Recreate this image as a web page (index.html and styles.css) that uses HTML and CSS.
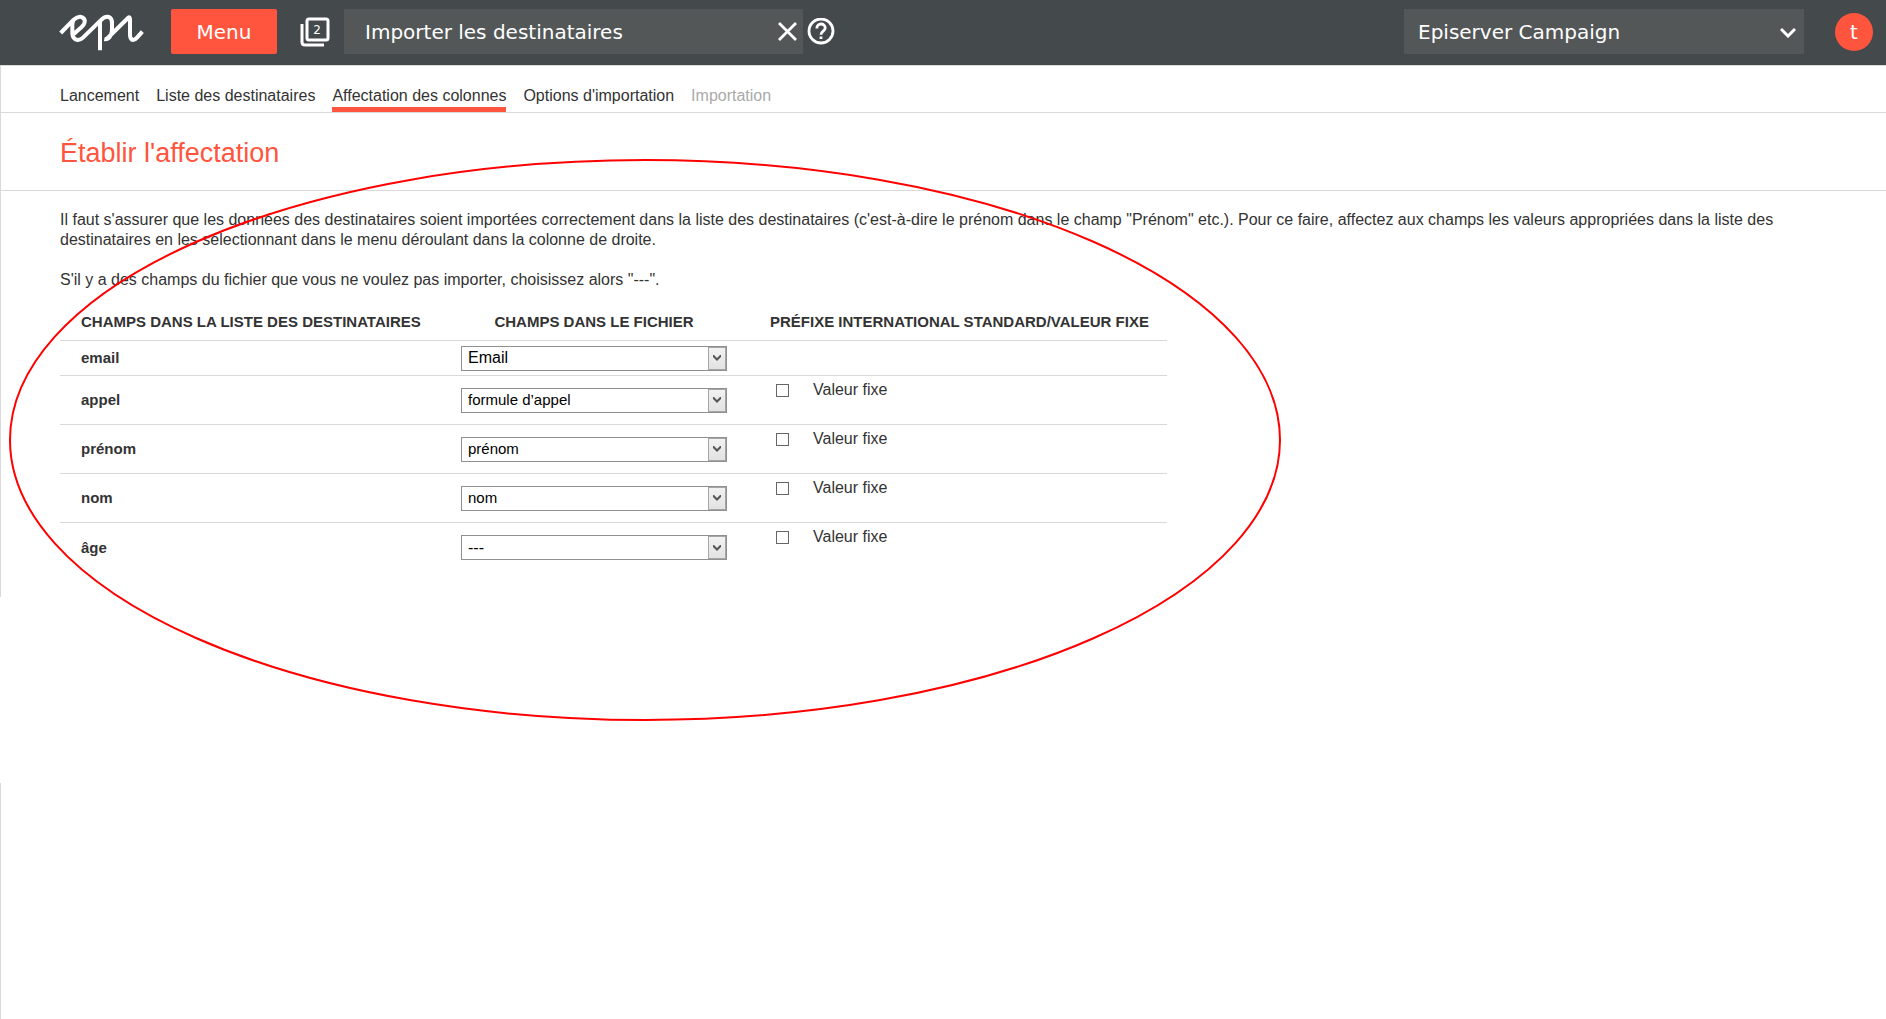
FILE: index.html
```html
<!DOCTYPE html>
<html lang="fr">
<head>
<meta charset="utf-8">
<meta name="viewport" content="width=device-width, initial-scale=1">
<title>Importer les destinataires</title>
<link rel="stylesheet" href="styles.css">
</head>
<body>
<header class="topbar">
  <a class="logo" href="#" aria-label="epi">
    <svg width="88" height="44" viewBox="54 36 264 132" fill="none" stroke="#fff" stroke-width="12" stroke-linejoin="round">
      <path d="M62 99L101 59Q112 49 121 50Q136 53 134 67Q133 74 124 82L98 105M101 59Q97 65 97 77V101Q98 117 112 120Q121 121 129 113L182 61Q195 47 207 51Q217 56 216 70V88Q215 106 206 114Q201 119 193 117M180 64V151M200 117L264 54Q270 48 270 58V106Q271 119 279 120Q285 120 291 113L307 95"/>
    </svg>
  </a>
  <button class="menu" type="button">Menu</button>
  <button class="icon-button windows" type="button" aria-label="Fenêtres ouvertes">
    <svg width="30" height="30" viewBox="0 0 30 30" fill="none" stroke="#fff" stroke-width="3">
      <rect x="7" y="2" width="21" height="21" rx="2"/>
      <path d="M2 7V25Q2 28 5 28H24"/>
      <text class="count" x="17" y="17" text-anchor="middle">2</text>
    </svg>
  </button>
  <div class="page-name">
    <span>Importer les destinataires</span>
    <button class="icon-button" type="button" aria-label="Fermer">
      <svg width="20" height="20" viewBox="0 0 20 20" fill="none" stroke="#fff" stroke-width="2.8"><path d="M2 1L19 18M19 1L2 18"/></svg>
    </button>
  </div>
  <button class="icon-button help" type="button" aria-label="Aide">
    <svg width="28" height="28" viewBox="0 0 28 28" fill="none" stroke="#fff" stroke-width="2.8">
      <circle cx="14" cy="13" r="12"/>
      <path d="M9.8 10.4C9.8 4.6 18.2 4.6 18.2 10C18.2 13.2 14 13.2 14 16.8M14 18.4V21"/>
    </svg>
  </button>
  <div class="product">
    <select aria-label="Produit"><option>Episerver Campaign</option></select>
    <svg class="product-arrow" width="16" height="11" viewBox="0 0 16 11" fill="none" stroke="#fff" stroke-width="3"><path d="M1 2L8 9L15 2"/></svg>
  </div>
  <button class="avatar" type="button">t</button>
</header>
<main class="page">
  <nav class="steps" aria-label="Étapes">
    <a href="#">Lancement</a>
    <a href="#">Liste des destinataires</a>
    <a class="current" href="#" aria-current="step">Affectation des colonnes</a>
    <a href="#">Options d'importation</a>
    <span class="disabled">Importation</span>
  </nav>
  <h1>Établir l'affectation</h1>
  <section class="content">
    <p>Il faut s'assurer que les données des destinataires soient importées correctement dans la liste des destinataires (c'est-à-dire le prénom dans le champ "Prénom" etc.). Pour ce faire, affectez aux champs les valeurs appropriées dans la liste des destinataires en les sélectionnant dans le menu déroulant dans la colonne de droite.</p>
    <p>S'il y a des champs du fichier que vous ne voulez pas importer, choisissez alors "---".</p>
    <table class="mapping">
      <colgroup><col class="col-field"><col class="col-file"><col class="col-fixed"></colgroup>
      <thead>
        <tr><th scope="col">CHAMPS DANS LA LISTE DES DESTINATAIRES</th><th scope="col" class="centered">CHAMPS DANS LE FICHIER</th><th scope="col">PRÉFIXE INTERNATIONAL STANDARD/VALEUR FIXE</th></tr>
      </thead>
      <tbody>
        <tr class="compact">
          <th scope="row"><label for="f-email">email</label></th>
          <td><div class="dropdown large"><select id="f-email"><option>Email</option></select><span class="arrow"><svg width="8" height="6" viewBox="0 0 8 6"><path d="M0 0H1L4 3L7 0H8V2L4 6L0 2Z"/></svg></span></div></td>
          <td></td>
        </tr>
        <tr>
          <th scope="row"><label for="f-appel">appel</label></th>
          <td><div class="dropdown"><select id="f-appel"><option>formule d’appel</option></select><span class="arrow"><svg width="8" height="6" viewBox="0 0 8 6"><path d="M0 0H1L4 3L7 0H8V2L4 6L0 2Z"/></svg></span></div></td>
          <td class="fixed"><label><input type="checkbox">Valeur fixe</label></td>
        </tr>
        <tr>
          <th scope="row"><label for="f-prenom">prénom</label></th>
          <td><div class="dropdown"><select id="f-prenom"><option>prénom</option></select><span class="arrow"><svg width="8" height="6" viewBox="0 0 8 6"><path d="M0 0H1L4 3L7 0H8V2L4 6L0 2Z"/></svg></span></div></td>
          <td class="fixed"><label><input type="checkbox">Valeur fixe</label></td>
        </tr>
        <tr>
          <th scope="row"><label for="f-nom">nom</label></th>
          <td><div class="dropdown"><select id="f-nom"><option>nom</option></select><span class="arrow"><svg width="8" height="6" viewBox="0 0 8 6"><path d="M0 0H1L4 3L7 0H8V2L4 6L0 2Z"/></svg></span></div></td>
          <td class="fixed"><label><input type="checkbox">Valeur fixe</label></td>
        </tr>
        <tr>
          <th scope="row"><label for="f-age">âge</label></th>
          <td><div class="dropdown large"><select id="f-age"><option>---</option></select><span class="arrow"><svg width="8" height="6" viewBox="0 0 8 6"><path d="M0 0H1L4 3L7 0H8V2L4 6L0 2Z"/></svg></span></div></td>
          <td class="fixed"><label><input type="checkbox">Valeur fixe</label></td>
        </tr>
      </tbody>
    </table>
  </section>
</main>
<div class="lower-frame"></div>
<svg class="highlight" width="1274" height="564" viewBox="0 0 1274 564" fill="none" stroke="#f00" stroke-width="2" aria-hidden="true"><ellipse cx="637" cy="282" rx="635" ry="280"/></svg>
</body>
</html>
```
FILE: styles.css
```css
* { box-sizing: border-box; }

body {
  position: relative;
  display: flex;
  flex-direction: column;
  min-height: 100vh;
  margin: 0;
  background: #fff;
  color: #333;
  font: 16px/20px "Liberation Sans", Arial, sans-serif;
}

button, select, input { margin: 0; font: inherit; }
button { padding: 0; border: 0; cursor: pointer; }

/* Top bar */
.topbar {
  display: flex;
  align-items: center;
  height: 65px;
  padding: 0 13px 2px 58px;
  background: #44494b;
  color: #fff;
  font: 20px/24px Verdana, "DejaVu Sans", sans-serif;
}
.logo { display: flex; margin-right: 25px; padding-top: 4px; }
.menu {
  width: 106px;
  height: 45px;
  border-radius: 2px;
  background: #ff553e;
  color: #fff;
}
.icon-button { display: flex; background: none; }
.windows { margin: 0 14px 0 23px; }
.count { fill: #fff; stroke: none; font-size: 12px; }
.page-name {
  display: flex;
  align-items: center;
  justify-content: space-between;
  flex: 0 1 459px;
  height: 45px;
  padding: 0 6px 0 21px;
  background: #535758;
}
.help { margin-left: 4px; }
.product {
  position: relative;
  flex: 0 1 400px;
  margin-left: auto;
}
.product select {
  width: 100%;
  height: 45px;
  padding: 0 40px 0 14px;
  border: 0;
  border-radius: 0;
  appearance: none;
  background: #535758;
  color: #fff;
}
.product-arrow {
  position: absolute;
  top: 18px;
  right: 8px;
  pointer-events: none;
}
.avatar {
  width: 38px;
  height: 38px;
  margin-left: 31px;
  border-radius: 50%;
  background: #ff553e;
  color: #fff;
}

/* Page frame */
.page {
  padding-bottom: 25px;
  border-top: 1px solid #d9d9d9;
  border-left: 1px solid #d9d9d9;
}
.lower-frame {
  flex: 1;
  margin-top: 186px;
  border-left: 1px solid #d9d9d9;
}

.steps {
  display: flex;
  gap: 17px;
  height: 47px;
  padding: 20px 59px 0;
  border-bottom: 1px solid #d9d9d9;
}
.steps a { color: #333; text-decoration: none; }
.steps .current { border-bottom: 5px solid #ff553e; }
.steps .disabled { color: #aaa; }

h1 {
  margin: 0;
  padding: 25px 59px 22px;
  border-bottom: 1px solid #d9d9d9;
  color: #ff553e;
  font-size: 27px;
  font-weight: 400;
  line-height: 30px;
}

.content { padding: 19px 59px 0; }
.content p { margin: 0 0 20px; }

/* Column mapping */
.mapping {
  width: 1107px;
  max-width: 100%;
  border-collapse: separate;
  border-spacing: 0;
  table-layout: fixed;
}
.col-field { width: 400px; }
.col-file { width: 289px; }
.mapping th {
  padding: 0 0 0 21px;
  font-size: 15px;
  text-align: left;
}
.mapping thead th { height: 31px; padding-bottom: 6px; border-bottom: 1px solid #d9d9d9; }
.mapping thead th.centered { padding-left: 0; padding-right: 21px; text-align: center; }
.mapping td { height: 49px; padding: 0 22px 0 1px; }
.mapping .compact td { height: 35px; }
.mapping tbody tr:not(:last-child) > * { border-bottom: 1px solid #d9d9d9; }

.dropdown {
  display: flex;
  height: 25px;
  border: 1px solid #8f8f8f;
  background: #fff;
  position: relative;
}
.dropdown select {
  flex: 1;
  padding: 0 20px 0 6px;
  border: 0;
  appearance: none;
  background: none;
  color: #000;
  font-size: 15px;
}
.dropdown.large select { font-size: 16px; }
.arrow {
  position: absolute;
  inset: 0 0 0 auto;
  display: flex;
  align-items: center;
  justify-content: center;
  width: 18px;
  border: 1px solid #a6a6a6;
  background: linear-gradient(#f2f2f2, #e2e2e2);
  fill: #555;
  pointer-events: none;
}

.mapping .fixed { padding: 4px 0 0 27px; vertical-align: top; }
.fixed label { display: inline-flex; align-items: center; gap: 24px; }
.fixed input {
  width: 13px;
  height: 13px;
  border: 1px solid #666;
  appearance: none;
  background: #fff;
}
.fixed input:checked { background: #666; }

/* Ellipse drawn over the mapping area */
.highlight {
  position: absolute;
  top: 158px;
  left: 8px;
  pointer-events: none;
}
```
